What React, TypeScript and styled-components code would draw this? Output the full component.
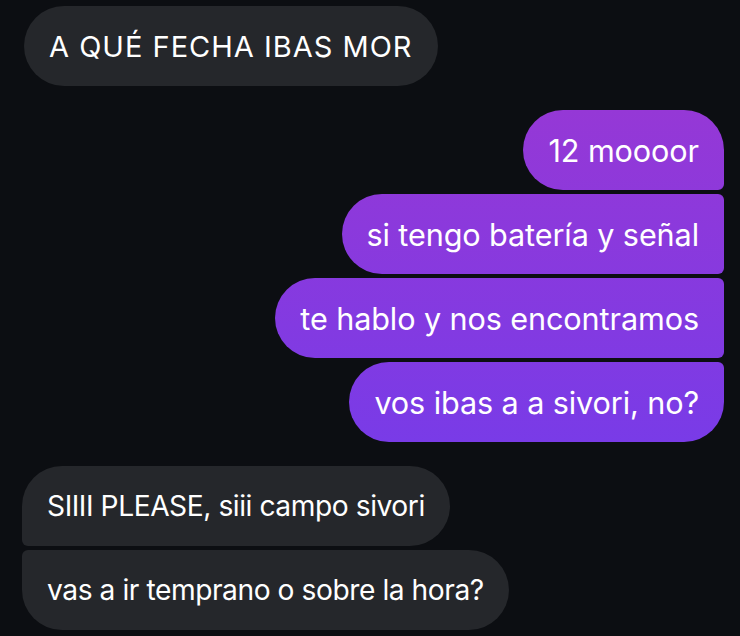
import React from "react";
import styled, { createGlobalStyle, css } from "styled-components";

type Shape = "single" | "first" | "middle" | "last";
type Side = "in" | "out";

const GlobalStyle = createGlobalStyle`
  html, body {
    margin: 0;
    padding: 0;
    background: #0c0e12;
  }
  body {
    font-family: Inter, "Noto Sans", "Liberation Sans", sans-serif;
  }
`;

const Thread = styled.div`
  width: 740px;
  height: 636px;
  box-sizing: border-box;
  padding: 6px 16px 0 22px;
  display: flex;
  flex-direction: column;
  gap: 24px;
  overflow: hidden;
`;

const Group = styled.div<{ $side: Side; $indent: number }>`
  display: flex;
  flex-direction: column;
  align-items: ${(p) => (p.$side === "out" ? "flex-end" : "flex-start")};
  gap: 4px;
  padding-left: ${(p) => p.$indent}px;
`;

const BIG = 40;
const SMALL = 6;

const corners = (side: Side, shape: Shape) => {
  const tail = (top: boolean) => {
    if (shape === "single") return BIG;
    if (shape === "first") return top ? BIG : SMALL;
    if (shape === "last") return top ? SMALL : BIG;
    return SMALL;
  };
  const tl = side === "in" ? tail(true) : BIG;
  const bl = side === "in" ? tail(false) : BIG;
  const tr = side === "out" ? tail(true) : BIG;
  const br = side === "out" ? tail(false) : BIG;
  return `${tl}px ${tr}px ${br}px ${bl}px`;
};

const Bubble = styled.div<{ $side: Side; $shape: Shape; $size: number; $track: number }>`
  box-sizing: border-box;
  height: 80px;
  display: flex;
  align-items: center;
  padding: 0 25px 0 25px;
  font-size: ${(p) => p.$size}px;
  letter-spacing: ${(p) => p.$track}px;
  color: #ffffff;
  white-space: nowrap;
  border-radius: ${(p) => corners(p.$side, p.$shape)};
  ${(p) =>
    p.$side === "out"
      ? css`
          background: linear-gradient(180deg, #9538d6 110px, #793be7 442px) fixed;
        `
      : css`
          background: #25272b;
        `}
`;

const shapeOf = (i: number, n: number): Shape =>
  n === 1 ? "single" : i === 0 ? "first" : i === n - 1 ? "last" : "middle";

const groups: { side: Side; size: number; track: number; indent: number; lines: string[] }[] = [
  { side: "in", size: 29, track: 1, indent: 2, lines: ["A QUÉ FECHA IBAS MOR"] },
  {
    side: "out",
    size: 30.6,
    track: -0.1,
    indent: 0,
    lines: [
      "12 moooor",
      "si tengo batería y señal",
      "te hablo y nos encontramos",
      "vos ibas a a sivori, no?",
    ],
  },
  {
    side: "in",
    size: 28.2,
    track: -0.45,
    indent: 0,
    lines: ["SIIII PLEASE, siii campo sivori", "vas a ir temprano o sobre la hora?"],
  },
];

export default function App() {
  return (
    <>
      <GlobalStyle />
      <Thread>
        {groups.map((g, gi) => (
          <Group key={gi} $side={g.side} $indent={g.indent}>
            {g.lines.map((line, i) => (
              <Bubble
                key={i}
                $side={g.side}
                $shape={shapeOf(i, g.lines.length)}
                $size={g.size}
                $track={g.track}
              >
                {line}
              </Bubble>
            ))}
          </Group>
        ))}
      </Thread>
    </>
  );
}
